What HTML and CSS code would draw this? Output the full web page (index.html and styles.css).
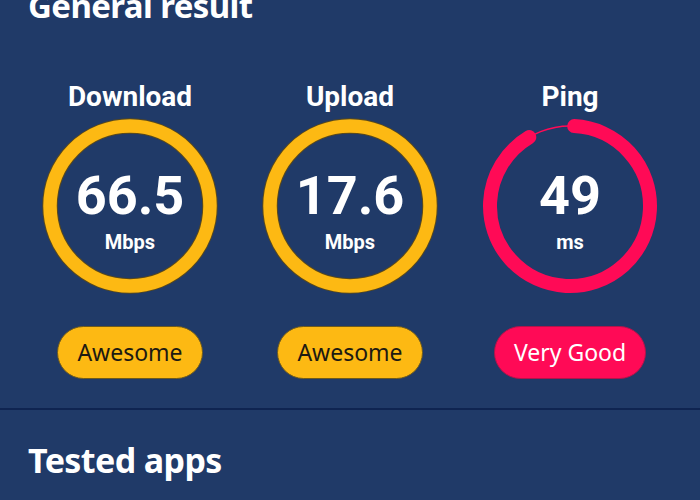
FILE: index.html
```html
<!DOCTYPE html>
<html lang="en">
<head>
  <meta charset="UTF-8" />
  <meta name="viewport" content="width=device-width, initial-scale=1" />
  <title>Speed Test Result</title>
  <link rel="stylesheet" href="styles.css">
</head>
<body>
  <!-- General result -->
  <section class="result">
    <h2 class="section-title">General result</h2>

    <div class="meters">
      <div class="meter">
        <div class="meter-label">Download</div>
        <div class="ring">
          <svg class="ring-svg" width="176" height="176" viewBox="0 0 176 176">
            <circle class="ring-edge" cx="88" cy="88" r="80" />
            <circle class="ring-track yellow" cx="88" cy="88" r="80" />
          </svg>
          <div class="ring-text">
            <div class="ring-value">66.5</div>
            <div class="ring-unit">Mbps</div>
          </div>
        </div>
        <div class="badge badge-yellow">Awesome</div>
      </div>

      <div class="meter">
        <div class="meter-label">Upload</div>
        <div class="ring">
          <svg class="ring-svg" width="176" height="176" viewBox="0 0 176 176">
            <circle class="ring-edge" cx="88" cy="88" r="80" />
            <circle class="ring-track yellow" cx="88" cy="88" r="80" />
          </svg>
          <div class="ring-text">
            <div class="ring-value">17.6</div>
            <div class="ring-unit">Mbps</div>
          </div>
        </div>
        <div class="badge badge-yellow">Awesome</div>
      </div>

      <div class="meter">
        <div class="meter-label">Ping</div>
        <div class="ring">
          <svg class="ring-svg" width="176" height="176" viewBox="0 0 176 176">
            <circle class="ring-thin" cx="88" cy="88" r="80" />
            <!-- arc starts just right of 12 o'clock and runs clockwise -->
            <circle class="ring-arc" cx="88" cy="88" r="80"
                    stroke-dasharray="455 503" transform="rotate(-87 88 88)" />
          </svg>
          <div class="ring-text">
            <div class="ring-value">49</div>
            <div class="ring-unit">ms</div>
          </div>
        </div>
        <div class="badge badge-pink">Very Good</div>
      </div>
    </div>
  </section>

  <!-- Tested apps -->
  <section class="apps">
    <h2 class="section-title">Tested apps</h2>
  </section>
</body>
</html>
```

FILE: styles.css
```css
:root {
  --bg-color: #203a68;
  --divider-color: #0f2451;
  --yellow: #fdb913;
  --pink: #ff0a56;
  --text-light: #ffffff;
  --text-dark: #1d1a12;
}

html {
  background: var(--bg-color);
}

body {
  margin: 0;
  width: 700px;
  height: 500px;
  overflow: hidden;
  background: var(--bg-color);
  color: var(--text-light);
  font-family: 'Noto Sans', sans-serif;
}

/* Section headings */
.section-title {
  margin: 0;
  padding-left: 28px;
  font-size: 33px;
  font-weight: 700;
  line-height: 40px;
  letter-spacing: -0.6px;
}

.result {
  border-bottom: 2px solid var(--divider-color);
  padding-bottom: 29px;
}

.result .section-title {
  margin-top: -14px;
}

/* Three meters in a row */
.meters {
  display: grid;
  grid-template-columns: repeat(3, 1fr);
  padding: 55px 20px 0;
}

.meter {
  display: flex;
  flex-direction: column;
  align-items: center;
}

.meter-label {
  font-family: Roboto, sans-serif;
  font-size: 28px;
  font-weight: 700;
  line-height: 32px;
}

/* Ring with value stacked in the same grid cell */
.ring {
  display: grid;
  margin-top: 5px;
  width: 176px;
  height: 176px;
}

.ring-svg,
.ring-text {
  grid-area: 1 / 1;
}

.ring-edge {
  fill: none;
  stroke: #5a4a1c;
  stroke-width: 15.5;
}

.ring-track {
  fill: none;
  stroke-width: 13.5;
}

.ring-track.yellow {
  stroke: var(--yellow);
}

.ring-thin {
  fill: none;
  stroke: var(--pink);
  stroke-width: 1.5;
}

.ring-arc {
  fill: none;
  stroke: var(--pink);
  stroke-width: 14;
  stroke-linecap: round;
}

.ring-text {
  display: flex;
  flex-direction: column;
  align-items: center;
  padding-top: 50px;
  font-family: Roboto, sans-serif;
  font-weight: 700;
}

.ring-value {
  font-size: 54px;
  line-height: 56px;
}

.ring-unit {
  margin-top: 6px;
  font-size: 20px;
  line-height: 24px;
}

/* Rating pills */
.badge {
  margin-top: 32px;
  box-sizing: border-box;
  height: 53px;
  padding: 0 19px;
  border-radius: 27px;
  font-size: 23px;
  line-height: 51px;
  white-space: nowrap;
}

.badge-yellow {
  background: var(--yellow);
  border: 1px solid #6d5a1e;
  color: var(--text-dark);
}

.badge-pink {
  background: var(--pink);
  border: 1px solid #b0154a;
  color: var(--text-light);
}

.apps {
  padding-top: 30px;
}

.apps .section-title {
  font-size: 34px;
}
```
